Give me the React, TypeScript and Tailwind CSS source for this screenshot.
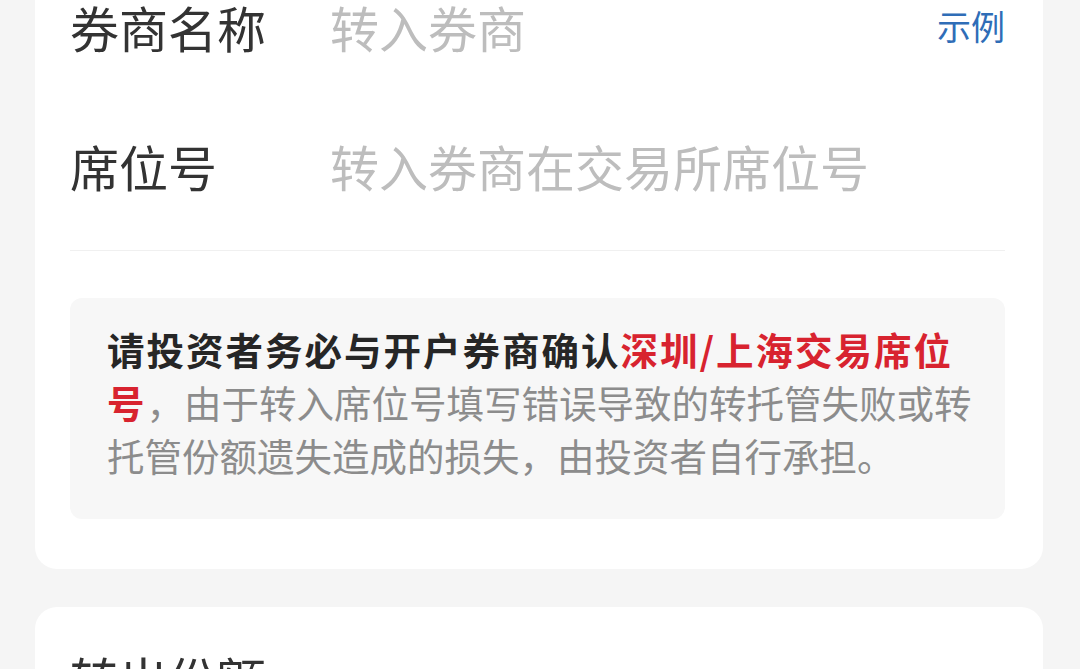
import React from 'react';

const font = { fontFamily: '"Noto Sans CJK SC", "Noto Sans", sans-serif' };

interface FieldRowProps {
  label: string;
  placeholder: string;
  action?: string;
  height: string;
}

const FieldRow: React.FC<FieldRowProps> = ({ label, placeholder, action, height }) => (
  <div className={`flex items-center ${height}`}>
    <span className="w-[260px] shrink-0 text-[49px] leading-none text-[#333333]">{label}</span>
    <input
      readOnly
      placeholder={placeholder}
      className="min-w-0 flex-1 bg-transparent text-[49px] leading-none text-[#333333] outline-none placeholder:text-[#bdbdbd]"
    />
    {action && <button className="ml-4 text-[34px] leading-none text-[#2f6db7]">{action}</button>}
  </div>
);

export default function App() {
  return (
    <div className="min-h-[669px] overflow-hidden bg-[#f5f5f5]" style={font}>
      {/* 转入券商信息 */}
      <div className="-mt-[44px] ml-[35px] w-[1008px] rounded-[22px] bg-white pl-[35px] pr-[38px] pb-[50px]">
        <FieldRow label="券商名称" placeholder="转入券商" action="示例" height="h-[140px]" />
        <FieldRow label="席位号" placeholder="转入券商在交易所席位号" height="h-[138px]" />
        <div className="mt-[16px] h-px bg-[#f0f0f0]" />

        <div className="mt-[47px] rounded-[12px] bg-[#f7f7f7] pl-[37px] pr-[35px] pt-[24px] pb-[38px]">
          <p className="w-[866px] text-[37.5px] leading-[53px] text-[#8c8c8c]">
            <span className="font-bold tracking-[2px] text-[#262626]">请投资者务必与开户券商确认</span>
            <span className="font-bold tracking-[2px] text-[#d8232f]">深圳/上海交易席位号</span>
            ，由于转入席位号填写错误导致的转托管失败或转托管份额遗失造成的损失，由投资者自行承担。
          </p>
        </div>
      </div>

      {/* 转出份额 */}
      <div className="ml-[35px] mt-[38px] w-[1008px] rounded-[22px] bg-white pl-[35px] pr-[38px]">
        <div className="flex h-[140px] items-center">
          <span className="text-[49px] leading-none text-[#333333]">转出份额</span>
        </div>
      </div>
    </div>
  );
}
